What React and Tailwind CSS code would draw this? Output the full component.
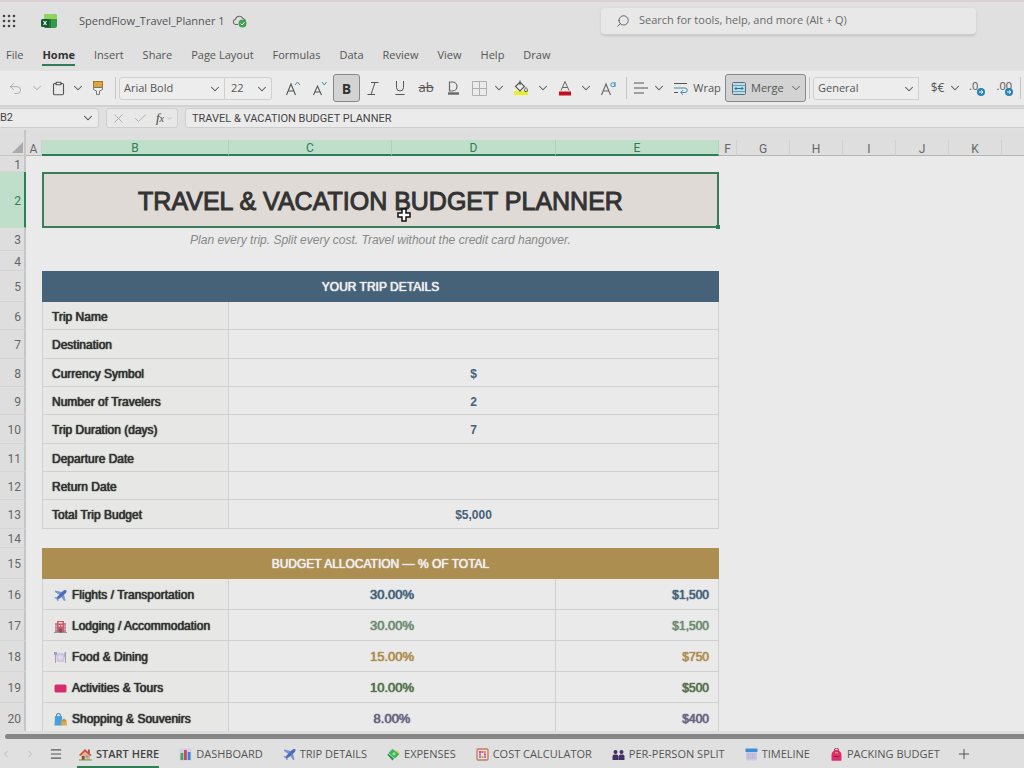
import { useState } from 'react';
import { ChevronDown, ChevronLeft, ChevronRight, Menu, Plus, X, Check, Search, Undo2, Clipboard } from 'lucide-react';

const MENUS = ['File', 'Home', 'Insert', 'Share', 'Page Layout', 'Formulas', 'Data', 'Review', 'View', 'Help', 'Draw'];

const COLUMNS = [
  { name: 'A', width: 'w-[16px]' },
  { name: 'B', width: 'w-[187px]', selected: true },
  { name: 'C', width: 'w-[163px]', selected: true },
  { name: 'D', width: 'w-[164px]', selected: true },
  { name: 'E', width: 'w-[163px]', selected: true },
  { name: 'F', width: 'w-[18px]' },
  { name: 'G', width: 'w-[53px]' },
  { name: 'H', width: 'w-[53px]' },
  { name: 'I', width: 'w-[53px]' },
  { name: 'J', width: 'w-[53px]' },
  { name: 'K', width: 'w-[53px]' },
];

const DETAILS = [
  { row: 6, label: 'Trip Name', value: '', height: 'h-[28px]' },
  { row: 7, label: 'Destination', value: '', height: 'h-[29px]' },
  { row: 8, label: 'Currency Symbol', value: '$', height: 'h-[28px]' },
  { row: 9, label: 'Number of Travelers', value: '2', height: 'h-[28px]' },
  { row: 10, label: 'Trip Duration (days)', value: '7', height: 'h-[29px]' },
  { row: 11, label: 'Departure Date', value: '', height: 'h-[28px]' },
  { row: 12, label: 'Return Date', value: '', height: 'h-[28px]' },
  { row: 13, label: 'Total Trip Budget', value: '$5,000', height: 'h-[29px]' },
];

const BUDGET = [
  { row: 16, icon: PlaneIcon, label: 'Flights / Transportation', pct: '30.00%', amount: '$1,500', color: 'text-[#45617a]' },
  { row: 17, icon: HotelIcon, label: 'Lodging / Accommodation', pct: '30.00%', amount: '$1,500', color: 'text-[#6f8a72]' },
  { row: 18, icon: DiningIcon, label: 'Food & Dining', pct: '15.00%', amount: '$750', color: 'text-[#ac8d50]' },
  { row: 19, icon: TicketIcon, label: 'Activities & Tours', pct: '10.00%', amount: '$500', color: 'text-[#56704f]' },
  { row: 20, icon: BagsIcon, label: 'Shopping & Souvenirs', pct: '8.00%', amount: '$400', color: 'text-[#66627f]' },
];

const SHEETS = [
  { name: 'START HERE', icon: HouseIcon },
  { name: 'DASHBOARD', icon: ChartIcon },
  { name: 'TRIP DETAILS', icon: PlaneIcon },
  { name: 'EXPENSES', icon: MoneyIcon },
  { name: 'COST CALCULATOR', icon: AbacusIcon },
  { name: 'PER-PERSON SPLIT', icon: PeopleIcon },
  { name: 'TIMELINE', icon: CalendarIcon },
  { name: 'PACKING BUDGET', icon: BackpackIcon },
];

export default function App() {
  const [menu, setMenu] = useState('Home');
  const [sheet, setSheet] = useState('START HERE');

  return (
    <div className="flex h-screen flex-col overflow-hidden bg-[#e0e0e0] font-['Open_Sans',sans-serif] text-[11px] text-[#555]">
      <TitleBar />
      <nav className="flex h-[31px] shrink-0 items-center gap-[19px] pl-[6px]">
        {MENUS.map((name) => (
          <button
            key={name}
            onClick={() => setMenu(name)}
            className={`relative flex h-full items-center whitespace-nowrap ${menu === name ? 'font-bold text-[#333]' : ''}`}
          >
            {name}
            {menu === name && <span className="absolute inset-x-0 bottom-[5px] h-[2px] bg-[#2f7d57]" />}
          </button>
        ))}
      </nav>
      <Toolbar />
      <FormulaBar />
      <Sheet />
      <div className="h-[9px] shrink-0 bg-[#dedede] pt-[3px] pl-[5px]">
        <div className="h-[5px] rounded-l-full bg-[#858585]" />
      </div>
      <footer className="flex h-[28px] shrink-0 items-center">
        <button aria-label="Previous sheet" className="w-[16px] text-[#bbb]"><ChevronLeft size={12} /></button>
        <button aria-label="Next sheet" className="flex w-[28px] justify-center text-[#bbb]"><ChevronRight size={12} /></button>
        <button aria-label="All sheets" className="flex w-[24px] justify-center"><Menu size={14} strokeWidth={2} /></button>
        <div className="flex h-full gap-[18px] pl-[9px]">
          {SHEETS.map(({ name, icon: Icon }) => (
            <button
              key={name}
              onClick={() => setSheet(name)}
              className={`flex h-full items-center gap-[4px] whitespace-nowrap border-b-2 pt-[3px] pl-[2px] ${
                sheet === name ? 'border-[#2f7d57] font-semibold text-[#444]' : 'border-transparent'
              }`}
            >
              <Icon />
              {name}
            </button>
          ))}
        </div>
        <button aria-label="Add sheet" className="ml-[16px]"><Plus size={16} strokeWidth={1.5} /></button>
      </footer>
    </div>
  );
}

function TitleBar() {
  return (
    <header className="flex h-[40px] shrink-0 items-center border-t-2 border-[#ddd0d2]">
      <button aria-label="App launcher" className="ml-[2px]">
        <svg width="14" height="14" viewBox="0 0 14 14" fill="#444">
          {[2, 7, 12].map((y) => [2, 7, 12].map((x) => <circle key={`${x}-${y}`} cx={x} cy={y} r="1.3" />))}
        </svg>
      </button>
      <svg className="ml-[25px]" width="16" height="16" viewBox="0 0 16 16">
        <rect x="3" y="1" width="13" height="14" rx="2.5" fill="#36994a" />
        <path d="M5.500 1h8A2.500 2.500 0 0 1 16 3.500V6H3V3.500A2.500 2.500 0 0 1 5.500 1z" fill="#8fd45c" />
        <path d="M3 6h7v9H5.500A2.500 2.500 0 0 1 3 12.500z" fill="#27733a" />
        <rect x="0" y="6" width="8" height="8" rx="1.500" fill="#14592f" />
        <path d="M2.500 8l3 4M5.500 8l-3 4" stroke="#fff" strokeWidth="1.1" />
      </svg>
      <span className="ml-[22px] whitespace-nowrap">SpendFlow_Travel_Planner 1</span>
      <svg className="ml-[7px]" width="15" height="14" viewBox="0 0 15 14" fill="none">
        <path d="M6 10.500H3.600A2.700 2.700 0 0 1 3.500 5.200 4 4 0 0 1 11 4.500a2.800 2.800 0 0 1 2.400 2.500" stroke="#666" strokeWidth="1.1" />
        <circle cx="10.500" cy="9.500" r="4" fill="#43a154" />
        <path d="M8.600 9.600l1.400 1.400 2.400-2.700" stroke="#fff" strokeWidth="1" />
      </svg>
      <label className="mr-[48px] ml-auto flex h-[27px] w-[375px] items-center rounded border-b border-[#cdcdcd] bg-[#e8e8e8] pl-[15px] shadow-sm">
        <Search size={14} strokeWidth={1.5} className="-scale-x-100" />
        <input
          aria-label="Search"
          placeholder="Search for tools, help, and more (Alt + Q)"
          className="ml-[9px] flex-1 bg-transparent outline-none placeholder:text-[#6a6a6a]"
        />
      </label>
    </header>
  );
}

function Toolbar() {
  return (
    <div className="flex h-[34px] shrink-0 items-center overflow-hidden bg-[#ebebeb]">
      <Tool label="Undo" width="w-[30px]"><Undo2 size={15} strokeWidth={1.5} className="text-[#aaa]" /></Tool>
      <Chevron label="Undo options" muted />
      <Tool label="Paste" width="w-[29px]"><Clipboard size={15} strokeWidth={1.8} /></Tool>
      <Chevron label="Paste options" narrow />
      <Tool label="Format painter" width="w-[29px]">
        <svg width="12" height="15" viewBox="0 0 12 15">
          <rect x="1.500" y="0.500" width="9" height="6" fill="#dda63c" stroke="#a17828" />
          <path d="M1.500 6.500h9v2l-3 1.500v3.500h-3V10l-3-1.500z" fill="#eee" stroke="#777" />
        </svg>
      </Tool>
      <Divider />
      <Dropdown label="Font" value="Arial Bold" width="w-[106px]" />
      <Dropdown label="Font size" value="22" width="w-[47px]" joined />
      <div className="w-[7px] shrink-0" />
      <Tool label="Increase font size" width="w-[27px]"><GrowIcon up /></Tool>
      <Tool label="Decrease font size" width="w-[27px]"><GrowIcon /></Tool>
      <button aria-label="Bold" aria-pressed="true" className="flex h-[28px] w-[27px] shrink-0 items-center justify-center rounded-[3px] border border-[#888] bg-[#d3d3d3] text-[14px] font-bold text-[#333]">
        B
      </button>
      <Tool label="Italic" width="w-[26px]">
        <svg width="12" height="13" viewBox="0 0 12 13" stroke="#555" fill="none"><path d="M4 .5h7.500M.5 12.500H8M8 .5L4 12.500" /></svg>
      </Tool>
      <Tool label="Underline" width="w-[27px]">
        <svg width="10" height="14" viewBox="0 0 10 14" stroke="#555" fill="none"><path d="M1.500 0v6.500a3.500 3.500 0 0 0 7 0V0M.5 13.500h9" /></svg>
      </Tool>
      <Tool label="Strikethrough" width="w-[26px]"><s className="text-[13px]">ab</s></Tool>
      <Tool label="Double underline" width="w-[27px]">
        <svg width="12" height="15" viewBox="0 0 12 15" stroke="#666" fill="none">
          <path d="M2.500 1h3a4.500 4.500 0 0 1 0 9h-3z" strokeWidth="1.200" />
          <path d="M1 12.500h11" strokeWidth="2.400" />
        </svg>
      </Tool>
      <Tool label="Borders" width="w-[26px]">
        <svg width="15" height="15" viewBox="0 0 15 15" stroke="#b0b0b0" fill="none"><path d="M.5.5h14v14H.5zM7.500.5v14M.5 7.500h14" /></svg>
      </Tool>
      <Chevron label="Border options" />
      <Tool label="Fill colour" width="w-[30px]">
        <svg width="15" height="16" viewBox="0 0 15 16" fill="none" stroke="#555">
          <path d="M0 11h14v4H0z" fill="#e5ef2c" stroke="none" />
          <path d="M1.500 6.500L6 2l4.500 4.500L6 11zM6 5V.5" strokeWidth="1.100" />
          <path d="M12 7.500c1 1.200 1.500 2 1.500 2.600a1.500 1.500 0 0 1-3 0c0-.6.5-1.400 1.500-2.600z" />
        </svg>
      </Tool>
      <Chevron label="Fill options" />
      <Tool label="Font colour" width="w-[29px]">
        <svg width="12" height="15" viewBox="0 0 12 15" fill="none" stroke="#666">
          <path d="M0 10.500h12v4H0z" fill="#c50f1f" stroke="none" />
          <path d="M2 9.500L6 .5l4 9M3.500 6.500h5" />
        </svg>
      </Tool>
      <Chevron label="Font colour options" />
      <Tool label="Text effects" width="w-[30px]">
        <svg width="15" height="15" viewBox="0 0 15 15" fill="none" stroke="#666">
          <path d="M.5 14L5 3l4.500 11M2 10h6" strokeWidth="1.100" />
          <path d="M14 1v5" stroke="#3a8fb5" /><circle cx="11.800" cy="3.700" r="2" stroke="#3a8fb5" />
        </svg>
      </Tool>
      <Divider />
      <Tool label="Align" width="w-[22px]">
        <svg width="14" height="12" viewBox="0 0 14 12" stroke="#555"><path d="M0 1h10M0 6h14M0 11h10" /></svg>
      </Tool>
      <Chevron label="Align options" />
      <button className="ml-[8px] flex h-[28px] shrink-0 items-center gap-[5px]">
        <svg width="14" height="13" viewBox="0 0 14 13" fill="none" stroke="#555">
          <path d="M0 1.500h13M0 10.500h4" />
          <path d="M0 6h11a2.200 2.200 0 0 1 0 4.500H7M9 8.200L6.700 10.500 9 12.800" stroke="#3a8fb5" />
        </svg>
        <span className="w-[28px]">Wrap</span>
      </button>
      <button aria-pressed="true" className="ml-[4px] flex h-[28px] w-[81px] shrink-0 items-center gap-[5px] rounded-[3px] border border-[#888] bg-[#d3d3d3] pl-[6px]">
        <svg width="14" height="13" viewBox="0 0 14 13" fill="none" stroke="#55707f">
          <rect x=".5" y=".5" width="13" height="12" rx="1" fill="#b7dceb" />
          <path d="M0 3.500h14M0 9.500h14" strokeOpacity=".6" />
          <path d="M3 6.500h8M4.500 5L3 6.500 4.500 8M9.500 5L11 6.500 9.500 8" stroke="#2c6f96" />
        </svg>
        Merge
        <ChevronDown size={14} strokeWidth={1.6} />
      </button>
      <Divider />
      <Dropdown label="Number format" value="General" width="w-[106px]" />
      <Tool label="Currency" width="w-[29px]"><span className="pl-[8px] text-[12px]">$€</span></Tool>
      <Chevron label="Currency options" />
      <Tool label="Decrease decimals" width="w-[30px]"><DecimalIcon text=".0" /></Tool>
      <Tool label="Increase decimals" width="w-[25px]"><DecimalIcon text=".00" /></Tool>
      <Divider />
    </div>
  );
}

function Tool({ label, width, children }) {
  return (
    <button aria-label={label} className={`flex h-[28px] shrink-0 items-center justify-center ${width}`}>
      {children}
    </button>
  );
}

function Chevron({ label, muted, narrow }) {
  return (
    <button
      aria-label={label}
      className={`flex h-[28px] shrink-0 items-center justify-center ${narrow ? 'w-[10px]' : 'w-[14px]'} ${muted ? 'text-[#b5b5b5]' : ''}`}
    >
      <ChevronDown size={14} strokeWidth={1.8} className="shrink-0" />
    </button>
  );
}

function Divider() {
  return <div className="mx-[3px] h-[22px] w-px shrink-0 bg-[#c6c6c6]" />;
}

function Dropdown({ label, value, width, joined }) {
  return (
    <div className={`relative shrink-0 ${width}`}>
      <select
        aria-label={label}
        className={`h-[23px] w-full appearance-none border border-[#cfcfcf] bg-[#ededed] outline-none ${
          joined ? 'rounded-r-[3px] border-l-0 pl-[6px]' : 'rounded-l-[3px] pl-[4px]'
        }`}
      >
        <option>{value}</option>
      </select>
      <ChevronDown size={14} strokeWidth={1.8} className="pointer-events-none absolute top-[5px] right-[3px]" />
    </div>
  );
}

function FormulaBar() {
  return (
    <div className="flex h-[25px] shrink-0 items-start gap-[7px] border-t-2 border-[#d2d2d2] pt-px font-['Roboto',sans-serif] text-[#444]">
      <div className="flex h-[20px] w-[99px] items-center rounded-r-[3px] border border-l-0 border-[#cecece] bg-[#ebebeb]">
        <input aria-label="Name box" defaultValue="B2" className="min-w-0 flex-1 bg-transparent outline-none" />
        <button aria-label="Named ranges" className="px-[3px]"><ChevronDown size={14} strokeWidth={1.8} /></button>
      </div>
      <div className="flex h-[20px] w-[72px] items-center justify-between rounded-[3px] border border-[#cecece] bg-[#e8e8e8] px-[4px]">
        <button aria-label="Cancel" className="text-[#aaa]"><X size={15} strokeWidth={1.5} /></button>
        <button aria-label="Enter" className="text-[#aaa]"><Check size={15} strokeWidth={1.5} /></button>
        <button aria-label="Insert function" className="flex items-center font-['Liberation_Serif',serif] text-[13px] italic">
          f<span className="text-[10px]">x</span>
          <ChevronDown size={7} className="ml-[2px] text-[#aaa]" />
        </button>
      </div>
      <input
        aria-label="Formula bar"
        defaultValue="TRAVEL & VACATION BUDGET PLANNER"
        className="h-[20px] min-w-0 flex-1 rounded-l-[3px] border border-r-0 border-[#cecece] bg-[#ebebeb] pl-[6px] outline-none"
      />
    </div>
  );
}

function Sheet() {
  return (
    <main className="min-h-0 flex-1 overflow-hidden bg-[#eaeaea] font-['Liberation_Sans',sans-serif] text-[12px] text-[#333]">
      <div className="h-[10px] bg-[#dedede]"><div className="h-full w-[26px] border-r-2 border-[#c6c6c6]" /></div>
      <table className="w-full table-fixed border-separate border-spacing-0">
        <thead>
          <tr className="h-[16px] font-['Roboto',sans-serif] leading-none text-[#666]">
            <th className="h-[16px] w-[26px] border-r-2 border-b border-[#c6c6c6] bg-[#dedede] p-0">
              <svg className="ml-[12px]" width="11" height="11" viewBox="0 0 11 11"><path d="M11 0v11H0z" fill="#aaa" /></svg>
            </th>
            {COLUMNS.map(({ name, width, selected }) => (
              <th
                key={name}
                className={`h-[16px] p-0 pt-[2px] font-normal ${width} ${
                  selected
                    ? 'border-b-2 border-b-[#2f7d57] bg-[#bfdfca] text-[#2f7d57] not-last:border-r not-last:border-r-[#aed0ba]'
                    : 'border-r border-b border-r-[#d0d0d0] border-b-[#b5b5b5] bg-[#dedede]'
                }`}
              >
                {name}
              </th>
            ))}
            <th className="border-b border-[#b5b5b5] bg-[#dedede] p-0" />
          </tr>
        </thead>
        <tbody>
          <Row number={1} height="h-[16px]" />
          <Row number={2} height="h-[56px]" selected>
            <td colSpan={4} className="relative border-2 border-[#3a7d5c] bg-[#dfdad6] p-0 pt-[2px] text-center text-[25px] [-webkit-text-stroke:1px]">
              TRAVEL &amp; VACATION BUDGET PLANNER
              <span className="absolute -right-[3px] -bottom-[3px] h-[4px] w-[4px] bg-[#2f7d57]" />
              <svg className="absolute top-[34px] left-[353px]" width="14" height="14" viewBox="0 0 14 14">
                <path d="M5 1h4v4h4v4H9v4H5V9H1V5h4z" fill="#fff" stroke="#111" strokeWidth="1.500" />
              </svg>
            </td>
          </Row>
          <Row number={3} height="h-[23px]">
            <td colSpan={4} className="p-0 text-center text-[#888] italic">
              Plan every trip. Split every cost. Travel without the credit card hangover.
            </td>
          </Row>
          <Row number={4} height="h-[20px]" />
          <Row number={5} height="h-[31px]">
            <Band color="bg-[#466279]">YOUR TRIP DETAILS</Band>
          </Row>
          {DETAILS.map(({ row, label, value, height }) => (
            <Row key={row} number={row} height={height}>
              <Label>{label}</Label>
              <td colSpan={3} className="border-r border-b border-[#d0d0d0] p-0 pt-[2px] text-center font-bold text-[#45617a]">{value}</td>
            </Row>
          ))}
          <Row number={14} height="h-[19px]" />
          <Row number={15} height="h-[31px]">
            <Band color="bg-[#ac8e51]">BUDGET ALLOCATION — % OF TOTAL</Band>
          </Row>
          {BUDGET.map(({ row, icon: Icon, label, pct, amount, color }) => (
            <Row key={row} number={row} height="h-[31px]">
              <Label>
                <span className="flex items-center gap-[5px] pl-[2px]"><Icon />{label}</span>
              </Label>
              <td colSpan={2} className={`border-r border-b border-[#d0d0d0] p-0 pt-px text-center text-[13px] [text-shadow:0_0_1px,0_0_1px] ${color}`}>{pct}</td>
              <td className={`border-r border-b border-[#d0d0d0] p-0 pt-[2px] pr-[9px] text-right [text-shadow:0_0_1px,0_0_1px] ${color}`}>{amount}</td>
            </Row>
          ))}
        </tbody>
      </table>
    </main>
  );
}

function Row({ number, height, selected, children }) {
  return (
    <tr className="text-[12px] leading-none">
      <th
        scope="row"
        className={`border-r-2 border-b p-0 pt-[2px] pr-[3px] text-right font-['Roboto',sans-serif] font-normal ${height} ${
          selected ? 'border-r-[#2f7d57] border-b-[#bfdfca] bg-[#bfdfca] text-[#2f7d57]' : 'border-r-[#c6c6c6] border-b-[#d4d4d4] bg-[#dedede] text-[#666]'
        }`}
      >
        {number}
      </th>
      <td className="p-0" />
      {children}
    </tr>
  );
}

function Band({ color, children }) {
  return (
    <td colSpan={4} className={`p-0 pt-px text-center text-[#eee] [text-shadow:0_0_1px,0_0_1px] ${color}`}>
      {children}
    </td>
  );
}

function Label({ children }) {
  return (
    <td className="border-x border-b border-[#d0d0d0] bg-[#e7e7e5] p-0 pt-[2px] pl-[9px] whitespace-nowrap [text-shadow:0_0_1px,0_0_1px]">
      {children}
    </td>
  );
}

function GrowIcon({ up }) {
  return (
    <svg width="14" height="15" viewBox="0 0 14 15" fill="none" stroke="#555">
      <path d={up ? 'M.5 14L5 3l4.500 11M2 10h6' : 'M.5 14L4.500 5l4 9M2 11h5'} strokeWidth="1.100" />
      <path d={up ? 'M9 4l2.500-3L14 4' : 'M9 1l2.300 3L13.500 1'} stroke="#3a8fb5" />
    </svg>
  );
}

function DecimalIcon({ text }) {
  return (
    <span className="relative flex h-[16px] w-[16px] items-start leading-none">
      {text}
      <svg className="absolute right-0 bottom-0" width="8" height="8" viewBox="0 0 8 8">
        <circle cx="4" cy="4" r="4" fill="#2583b5" />
        <path d="M2 4h4M4.200 2.300L6 4 4.200 5.700" stroke="#fff" fill="none" />
      </svg>
    </span>
  );
}

// small colour pictures used in cells and sheet tabs
function Emoji({ children }) {
  return <svg className="shrink-0" width="13" height="13" viewBox="0 0 13 13">{children}</svg>;
}

function PlaneIcon() {
  return (
    <Emoji>
      <path d="M1 1.500l7 1.500 2.500-2 2 .5-.5 2.200L10 5.500l1.500 6-1.500.5-3-4.500-2.500 2 .2 2-1 .8L2.500 10 .5 9l.7-1 2 .2L5.500 6 1 3z" fill="#7d93cf" />
      <path d="M8 3l2.500-2 2 .5-.5 2.200-6 5.500-2.500 1L3.200 8z" fill="#4a6fb8" />
    </Emoji>
  );
}

function HotelIcon() {
  return (
    <Emoji>
      <rect x="1" y="3" width="11" height="9.500" fill="#c9838a" />
      <rect x="3" y="1" width="7" height="11.500" fill="#cf5b66" />
      <path d="M0 12h13v1H0z" fill="#8b9a8c" />
      <path d="M4.500 5h1.500v1.500H4.500zM7 5h1.500v1.500H7zM1.500 5.500h1V7h-1zM10.500 5.500h1V7h-1zM1.500 8.500h1V10h-1zM10.500 8.500h1V10h-1z" fill="#b9d7ea" />
      <rect x="5" y="8.500" width="3" height="4" fill="#6f5a70" />
      <rect x="4.500" y="2" width="4" height="1.500" fill="#f0d9dc" />
    </Emoji>
  );
}

function DiningIcon() {
  return (
    <Emoji>
      <rect x="2.500" y="2" width="8" height="9" rx="2" fill="#cdc5de" />
      <circle cx="6.500" cy="6.500" r="2.500" fill="#ded8ea" />
      <path d="M.5 1v3M1.500 1v11M2.500 1v3M11.500 12V1c-1.200 1-1.200 4 0 6" stroke="#9f95bd" fill="none" strokeWidth=".9" />
    </Emoji>
  );
}

function TicketIcon() {
  return (
    <Emoji>
      <rect x=".5" y="2.5" width="12" height="8" rx="1.5" fill="#d42e6c" />
    </Emoji>
  );
}

function BagsIcon() {
  return (
    <Emoji>
      <path d="M2.500 4V2.500a2 2 0 0 1 4 0V4" stroke="#2d6fa8" fill="none" />
      <path d="M1 3h7l.5 9.500h-8z" fill="#4a9edb" />
      <path d="M7.500 7h5l.5 5.500H7z" fill="#e0a948" />
      <path d="M9 8.500V7a1 1 0 0 1 2 0v1.500" stroke="#9b6f22" fill="none" strokeWidth=".8" />
    </Emoji>
  );
}

function HouseIcon() {
  return (
    <Emoji>
      <path d="M2 6l4-3.500L11 6v6H2z" fill="#e3b38d" />
      <path d="M9 1.500h1.800V5H9z" fill="#a05340" />
      <path d="M0 7l6-6 6.500 6-1.200 1L6 3.500 1.200 8z" fill="#c94f3d" />
      <path d="M3 8h2.500v4H3z" fill="#8b4a3a" />
      <path d="M7 7.500h2.500v2H7z" fill="#6aa7d0" />
      <path d="M0 11.500h13v1H0z" fill="#629d4c" />
    </Emoji>
  );
}

function ChartIcon() {
  return (
    <Emoji>
      <rect x=".5" y=".5" width="12" height="12" rx="1" fill="#cfd0e2" />
      <rect x="1.500" y="5" width="2.800" height="7" fill="#3fa85a" />
      <rect x="5" y="2" width="2.800" height="10" fill="#d54066" />
      <rect x="8.700" y="4" width="2.800" height="8" fill="#3d83cf" />
    </Emoji>
  );
}

function MoneyIcon() {
  return (
    <Emoji>
      <path d="M5.500 1L12.500 6 8 10.500 1.500 5z" fill="#38b45a" />
      <path d="M1 5.500l6 5-1.500 2L.5 7z" fill="#2a8f48" />
      <circle cx="7" cy="5.800" r="1.600" fill="#a6dd8d" />
      <path d="M9 2.500l3.500 3" stroke="#e8cc4b" strokeWidth="1.300" />
    </Emoji>
  );
}

function AbacusIcon() {
  return (
    <Emoji>
      <rect x="1" y="1" width="11" height="11" rx="1" fill="#ecdcdc" stroke="#c27a5b" strokeWidth="1.300" />
      <path d="M3 3h2v2H3zM8 5.500h2v2H8z" fill="#d74a7a" />
      <path d="M5.500 3h2v2h-2zM3 5.500h2v2H3z" fill="#9d66c7" />
      <path d="M8 3h2v2H8zM5.500 8h2v2h-2z" fill="#e5a33d" />
      <path d="M3 8h2v2H3zM8 8h2v2H8z" fill="#6898d6" />
    </Emoji>
  );
}

function PeopleIcon() {
  return (
    <Emoji>
      <g fill="#443164">
        <circle cx="3.500" cy="4" r="2" /><circle cx="9.500" cy="4" r="2" />
        <path d="M.5 12V8.500a2 2 0 0 1 2-2h2a2 2 0 0 1 2 2V12zM6.800 12V8.500a2 2 0 0 1 2-2h1.700a2 2 0 0 1 2 2V12z" />
      </g>
    </Emoji>
  );
}

function CalendarIcon() {
  return (
    <Emoji>
      <rect x="1" y="1" width="11" height="11.500" rx="1" fill="#cbc9e2" />
      <path d="M.5.5h12v3.500H.5z" fill="#3c8fd6" />
      <path d="M2.500 6h8M2.500 8h8M2.500 10h8" stroke="#aaa5ce" strokeDasharray="1.500 .8" />
    </Emoji>
  );
}

function BackpackIcon() {
  return (
    <Emoji>
      <path d="M4.500 3V2a2 2 0 0 1 4 0v1" stroke="#b3213f" fill="none" />
      <path d="M1.500 12V7a5 5 0 0 1 10 0v5a.8.8 0 0 1-.8.8H2.300a.8.800 0 0 1-.8-.8z" fill="#dc2e6e" />
      <path d="M5 4h3v1.500H5z" fill="#f08a4a" />
      <path d="M3.500 8.500h6" stroke="#a81a4c" />
    </Emoji>
  );
}
